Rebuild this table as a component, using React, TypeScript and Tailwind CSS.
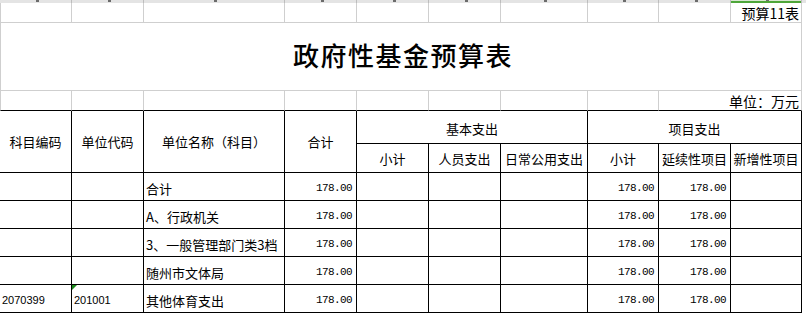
import type { ReactNode } from "react"

const cjk = "font-['Noto_Sans_CJK_SC','Noto_Sans',sans-serif]"

const cols = [72, 72, 141, 72, 72, 72, 87, 71, 72, 71]

function G({ children, span, className = "" }: { children?: ReactNode; span?: number; className?: string }) {
  return (
    <td colSpan={span} className={`border-r border-b border-[#cfcfcf] p-0 ${className}`}>
      {children}
    </td>
  )
}

function K({
  children,
  span,
  rows,
  className = "",
}: {
  children?: ReactNode
  span?: number
  rows?: number
  className?: string
}) {
  return (
    <td colSpan={span} rowSpan={rows} className={`border-r border-b border-black p-0 ${className}`}>
      {children}
    </td>
  )
}

const data = [
  { code: "", unit: "", name: "合计" },
  { code: "", unit: "", name: "A、行政机关" },
  { code: "", unit: "", name: "3、一般管理部门类3档" },
  { code: "", unit: "", name: "随州市文体局" },
  { code: "2070399", unit: "201001", name: "其他体育支出", flag: true },
]

function Num({ v }: { v: string }) {
  return (
    <span className="block pr-[4px] pt-[3px] text-right font-['Liberation_Mono',monospace] text-[11px] tracking-[-0.6px]">
      {v}
    </span>
  )
}

export default function App() {
  return (
    <div className={`w-[806px] h-[313px] overflow-hidden bg-white text-black ${cjk}`}>
      {/* column header remnant */}
      <div className="flex h-[3px] bg-[#e4e4e4]">
        {cols.map((w, i) => (
          <div
            key={i}
            style={{ width: w }}
            className={`relative shrink-0 border-r border-[#bdbdbd] ${i === 9 ? "bg-[#d9e8d2]" : ""}`}
          >
            <span className="absolute left-1/2 top-0 h-[2px] w-[3px] bg-[#6b6b6b]" />
            {i === 9 && <span className="absolute left-0 right-0 bottom-0 h-[2px] bg-[#4ea63a]" />}
          </div>
        ))}
      </div>

      <table className="table-fixed border-separate border-spacing-0 w-[802px]">
        <colgroup>
          {cols.map((w, i) => (
            <col key={i} style={{ width: w }} />
          ))}
        </colgroup>
        <tbody>
          <tr className="h-[20px]">
            <G className="border-l" />
            <G />
            <G />
            <G />
            <G />
            <G />
            <G />
            <G />
            <G />
            <G className="text-right text-[14px] leading-none pr-[2px]">预算11表</G>
          </tr>
          <tr className="h-[68px]">
            <G span={10} className="border-l text-center">
              <span className="text-[26px] font-medium tracking-[1.5px] leading-none pl-[4px]">政府性基金预算表</span>
            </G>
          </tr>
          <tr className="h-[20px]">
            <G className="border-l !border-b-black" />
            <G className="!border-b-black" />
            <G className="!border-b-black" />
            <G className="!border-b-black" />
            <G className="!border-b-black" />
            <G className="!border-b-black" />
            <G className="!border-b-black" />
            <G className="!border-b-black" />
            <G span={2} className="!border-b-black text-right text-[14px] leading-none pr-[2px]">
              单位：万元
            </G>
          </tr>
          <tr className="h-[33px] text-[13px] leading-none text-center">
            <K rows={2}>科目编码</K>
            <K rows={2}>单位代码</K>
            <K rows={2}>单位名称（科目）</K>
            <K rows={2}>合计</K>
            <K span={3} className="pt-[2px]">基本支出</K>
            <K span={3} className="pt-[2px]">项目支出</K>
          </tr>
          <tr className="h-[29px] text-[13px] leading-none text-center">
            <K>小计</K>
            <K>人员支出</K>
            <K>日常公用支出</K>
            <K>小计</K>
            <K>延续性项目</K>
            <K>新增性项目</K>
          </tr>
          {data.map((r, i) => (
            <tr key={i} className="h-[28px] text-[13px] leading-none">
              <K className="pl-[2px] pt-[3px] font-['Liberation_Sans',sans-serif] text-[11px]">{r.code}</K>
              <K className="relative pl-[2px] pt-[3px] font-['Liberation_Sans',sans-serif] text-[11px]">
                {r.flag && (
                  <span className="absolute left-0 top-0 h-0 w-0 border-t-[5px] border-r-[5px] border-t-[#1d8a1d] border-r-transparent" />
                )}
                {r.unit}
              </K>
              <K className="pl-[2px] pt-[3px]">{r.name}</K>
              <K>
                <Num v="178.00" />
              </K>
              <K />
              <K />
              <K />
              <K>
                <Num v="178.00" />
              </K>
              <K>
                <Num v="178.00" />
              </K>
              <K />
            </tr>
          ))}
        </tbody>
      </table>
    </div>
  )
}
